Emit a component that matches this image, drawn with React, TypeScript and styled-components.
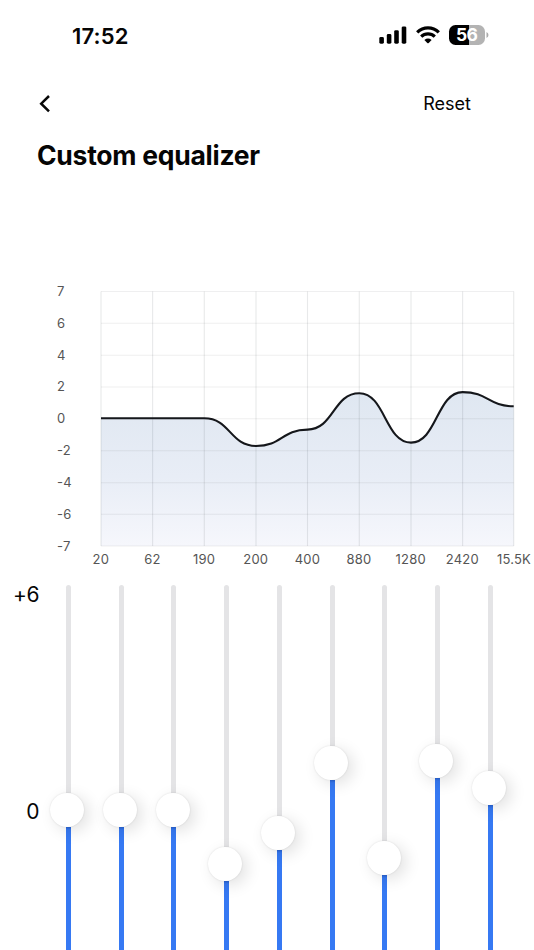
import React from "react";
import styled, { createGlobalStyle } from "styled-components";

const GlobalStyle = createGlobalStyle`
  * { box-sizing: border-box; }
  body { margin: 0; background: #fff; color: #050505; font-family: Inter, "Liberation Sans", sans-serif; }
`;

const Screen = styled.main`
  display: flex;
  flex-direction: column;
  width: 534px;
  height: 950px;
  overflow: hidden;
  background: #fff;
`;

const StatusBar = styled.div`
  display: flex;
  align-items: center;
  justify-content: space-between;
  height: 70px;
  padding: 0 45.5px 0 72px;
`;

const Clock = styled.time`
  font-size: 22px;
  font-weight: 600;
  letter-spacing: 0.15px;
  line-height: 26px;
  margin-top: 1px;
`;

const StatusIcons = styled.div`
  display: flex;
  align-items: center;
  gap: 9px;
  svg { display: block; }
`;

const BatteryWrap = styled.div`
  display: flex;
  align-items: center;
  gap: 1px;
`;

const Battery = styled.div<{ $level: number }>`
  width: 36px;
  height: 20px;
  border-radius: 6.5px;
  background: linear-gradient(90deg, #000 ${(p) => p.$level}%, #b3b3b3 ${(p) => p.$level}%);
  color: #fff;
  font-size: 17.5px;
  font-weight: 700;
  line-height: 20px;
  letter-spacing: -0.9px;
  text-align: center;
`;

const NavBar = styled.nav`
  display: flex;
  align-items: center;
  justify-content: space-between;
  height: 68px;
  padding: 0 63px 0 38px;
`;

const NavButton = styled.button`
  padding: 0;
  border: 0;
  background: none;
  color: inherit;
  font: 400 18px/22px Inter, sans-serif;
  svg { display: block; }
`;

const Title = styled.h1`
  margin: -1px 0 0;
  padding-left: 37px;
  height: 154px;
  font-size: 26.5px;
  font-weight: 700;
  line-height: 36px;
  letter-spacing: -0.26px;
`;

const ChartSection = styled.section`
  display: grid;
  grid-template-columns: 101px 1fr;
  height: 294px;
`;

const LevelLabels = styled.div`
  display: flex;
  flex-direction: column;
  margin-top: -15.2px;
  padding-left: 57px;
`;

const LevelLabel = styled.span`
  height: 31.85px;
  color: #555;
  font-size: 13px;
  line-height: 31.85px;
  letter-spacing: 0.2px;
`;

const Plot = styled.div`
  svg { display: block; overflow: visible; }
`;

const FrequencyLabels = styled.div`
  display: flex;
  margin: 4px 0 0 -26px;
`;

const FrequencyLabel = styled.span`
  flex: 0 0 51.65px;
  color: #555;
  font-size: 13px;
  line-height: 16px;
  letter-spacing: 0.2px;
  text-align: center;
`;

const Sliders = styled.section`
  display: flex;
  height: 365px;
`;

const Scale = styled.div`
  display: flex;
  flex-direction: column;
  gap: 191px;
  width: 40px;
  margin-top: -3px;
  padding-right: 0.7px;
  font-size: 21px;
  line-height: 26px;
  letter-spacing: -0.3px;
  text-align: right;
`;

const Bands = styled.div`
  display: flex;
  margin-left: 2px;
`;

const Band = styled.div`
  display: flex;
  flex-direction: column;
  align-items: center;
  flex: 0 0 52.75px;
  height: 365px;
`;

const Track = styled.div<{ $length: number }>`
  flex: 0 0 ${(p) => p.$length}px;
  width: 5px;
  border-radius: 3px 3px 0 0;
  background: #e4e4e6;
`;

const Knob = styled.div`
  flex: 0 0 34px;
  width: 34px;
  margin-left: -2.4px;
  border-radius: 50%;
  background: #fff;
  box-shadow: 0 0 2px rgba(0, 0, 0, 0.12), 5px 4px 16px rgba(0, 0, 0, 0.12);
  z-index: 1;
`;

const Fill = styled.div`
  flex: 1;
  width: 5px;
  background: linear-gradient(#2c66d6 0, #3679f3 3px);
`;

const levels = ["7", "6", "4", "2", "0", "-2", "-4", "-6", "-7"];
const frequencies = ["20", "62", "190", "200", "400", "880", "1280", "2420", "15.5K"];
const knobTops = [208.4, 208.4, 208.4, 261.8, 230.6, 161.2, 255.5, 158.5, 185.8];

const xs = [0, 51.6, 103.3, 155, 206.5, 258.3, 310, 361.6, 412.7];
const ys = [0.5, 32.3, 64.2, 96, 127.8, 159.7, 191.7, 223.3, 255];
const curveYs = [127.3, 127.3, 127.3, 155, 138.6, 102.2, 151.6, 101.1, 115.3];

const curve = xs.slice(1).reduce((path, x, i) => {
  const middle = (x + xs[i]) / 2;
  return `${path} C${middle} ${curveYs[i]} ${middle} ${curveYs[i + 1]} ${x} ${curveYs[i + 1]}`;
}, `M${xs[0]} ${curveYs[0]}`);

function Chart() {
  return (
    <svg width="413" height="256" viewBox="0 0 413 256">
      <defs>
        <linearGradient id="area" x1="0" y1="100" x2="0" y2="255" gradientUnits="userSpaceOnUse">
          <stop offset="0" stopColor="#dfe7f1" />
          <stop offset="0.55" stopColor="#e8edf6" />
          <stop offset="1" stopColor="#f6f7fc" />
        </linearGradient>
      </defs>
      <path d={`${curve} V255 H0 Z`} fill="url(#area)" />
      <g stroke="#303640" strokeOpacity="0.11" strokeWidth="1.1">
        {xs.map((x) => <path key={x} d={`M${x} 0.5V255`} />)}
        {ys.map((y) => <path key={y} d={`M0 ${y}H412.7`} strokeOpacity="0.08" />)}
      </g>
      <path d={curve} fill="none" stroke="#15171b" strokeWidth="2.1" />
    </svg>
  );
}

export default function App() {
  return (
    <Screen>
      <GlobalStyle />
      <StatusBar>
        <Clock>17:52</Clock>
        <StatusIcons>
          <svg width="28" height="18" viewBox="0 0 28 18">
            <rect x="0.3" y="11" width="4.6" height="6.7" rx="1.4" />
            <rect x="7.8" y="8" width="4.6" height="9.7" rx="1.4" />
            <rect x="15.2" y="4.2" width="4.6" height="13.5" rx="1.4" />
            <rect x="22.7" y="0.4" width="4.6" height="17.3" rx="1.4" />
          </svg>
          <svg width="24" height="18" viewBox="0 0 24 18">
            <g fill="none" stroke="#000" strokeWidth="3.2">
              <path d="M1.2 6.3C7.3 0.3 16.7 0.3 22.8 6.3" />
              <path d="M5.2 10.6C9 7 15 7 18.8 10.6" />
            </g>
            <path d="M8.4 14Q12 11.2 15.6 14L12.7 17Q12 17.7 11.3 17Z" />
          </svg>
          <BatteryWrap>
            <Battery $level={56}>56</Battery>
            <svg width="3" height="8" viewBox="0 0 3 8">
              <path d="M0.5 1Q2.5 2 2.5 4T0.5 7Z" fill="#aaa" />
            </svg>
          </BatteryWrap>
        </StatusIcons>
      </StatusBar>
      <NavBar>
        <NavButton aria-label="Back">
          <svg width="14" height="20" viewBox="0 0 14 20" fill="none" stroke="#080808" strokeWidth="2.5">
            <path d="M11 2L3.2 9.7L11 17.4" />
          </svg>
        </NavButton>
        <NavButton>Reset</NavButton>
      </NavBar>
      <Title>Custom equalizer</Title>
      <ChartSection>
        <LevelLabels>
          {levels.map((level) => <LevelLabel key={level}>{level}</LevelLabel>)}
        </LevelLabels>
        <Plot>
          <Chart />
          <FrequencyLabels>
            {frequencies.map((f) => <FrequencyLabel key={f}>{f}</FrequencyLabel>)}
          </FrequencyLabels>
        </Plot>
      </ChartSection>
      <Sliders>
        <Scale>
          <span>+6</span>
          <span>0</span>
        </Scale>
        <Bands>
          {knobTops.map((top, i) => (
            <Band key={frequencies[i]}>
              <Track $length={top} />
              <Knob />
              <Fill />
            </Band>
          ))}
        </Bands>
      </Sliders>
    </Screen>
  );
}
